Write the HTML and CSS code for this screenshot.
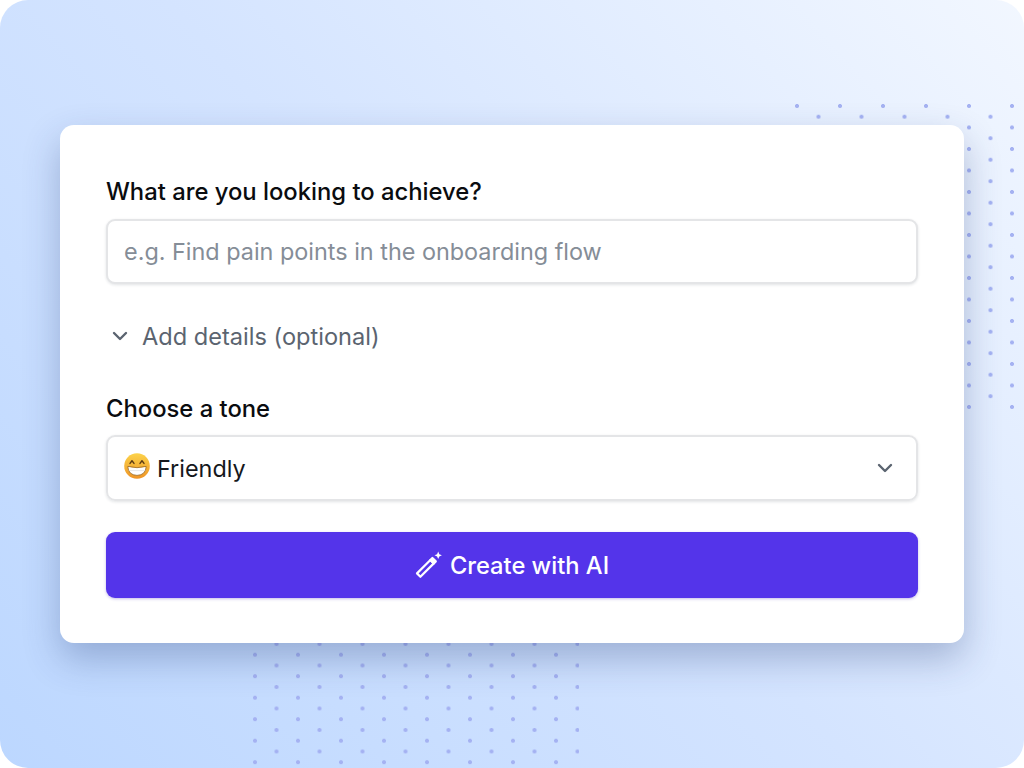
FILE: index.html
```html
<!DOCTYPE html>
<html lang="en">

<head>
    <meta charset="UTF-8">
    <meta name="viewport" content="width=device-width, initial-scale=1.0">
    <title>Create with AI</title>
    <link rel="stylesheet" href="styles.css">
</head>

<body>
    <main class="stage">
        <div class="dots dots-top"></div>
        <div class="dots dots-bottom"></div>

        <form class="card">
            <label class="field-label" for="goal">What are you looking to achieve?</label>
            <input class="text-input" id="goal" type="text" placeholder="e.g. Find pain points in the onboarding flow">

            <div class="details-toggle">
                <svg class="chevron" viewBox="0 0 16 16" width="16" height="16">
                    <path d="M2 5l6 6 6-6"></path>
                </svg>
                <span>Add details (optional)</span>
            </div>

            <div class="field-label tone-label">Choose a tone</div>
            <div class="select-box">
                <svg class="emoji" viewBox="0 0 26 26" width="26" height="26">
                    <defs>
                        <linearGradient id="emojiFace" x1="0" y1="0" x2="0" y2="1">
                            <stop offset="0" stop-color="#fcd34a"></stop>
                            <stop offset="1" stop-color="#ee9426"></stop>
                        </linearGradient>
                    </defs>
                    <circle cx="13" cy="13" r="12.8" fill="url(#emojiFace)"></circle>
                    <path d="M6 10.4l2-2.6 2 2.6M16 10.4l2-2.6 2 2.6" fill="none" stroke="#5a3a14" stroke-width="1.4" stroke-linecap="round" stroke-linejoin="round"></path>
                    <path d="M3.8 13.4q9.2 2.6 18.4 0q-.4 8.6-9.2 9q-8.8-.4-9.2-9z" fill="#fff" stroke="#8a5a18" stroke-width=".7"></path>
                    <path d="M4.6 17.6h16.8" fill="none" stroke="#d6d6d6" stroke-width=".6"></path>
                </svg>
                <span class="select-value">Friendly</span>
                <svg class="chevron select-chevron" viewBox="0 0 16 16" width="16" height="16">
                    <path d="M2 5l6 6 6-6"></path>
                </svg>
            </div>

            <button class="create-btn" type="button">
                <svg class="wand" viewBox="0 0 28 28" width="28" height="28">
                    <path d="M2 22.4L15.4 9l3.4 3.4L5.4 25.8z"></path>
                    <path class="cap" d="M15.4 9l2-2 3.4 3.4-2 2z"></path>
                    <path class="spark" d="M23.2 .6l1.1 2.6 2.6 1.1-2.6 1.1-1.1 2.6-1.1-2.6-2.6-1.1 2.6-1.1z"></path>
                </svg>
                <span>Create with AI</span>
            </button>
        </form>
    </main>
</body>

</html>
```

FILE: styles.css
```css
* {
    box-sizing: border-box;
}

html,
body {
    margin: 0;
    padding: 0;
    height: 100%;
    background-color: #fff;
}

body {
    font-family: Inter, "Liberation Sans", sans-serif;
}

.stage {
    position: relative;
    width: 1024px;
    height: 768px;
    display: flex;
    align-items: center;
    justify-content: center;
    overflow: hidden;
    border-radius: 28px;
    background: linear-gradient(48deg, #bcd7ff 0%, #d4e4ff 50%, #f2f7ff 100%);
}

.dots {
    position: absolute;
    background-image:
        radial-gradient(circle at 2px 2px, #a5b2f2 1.7px, transparent 2.3px),
        radial-gradient(circle at 2px 2px, #a5b2f2 1.7px, transparent 2.3px);
    background-size: 43px 21.5px;
    background-repeat: repeat;
}

.dots-top {
    top: 104px;
    left: 795px;
    width: 229px;
    height: 305px;
    background-position: 0 0, 21.5px 10.75px;
}

.dots-bottom {
    top: 642px;
    left: 253px;
    width: 326px;
    height: 126px;
    background-position: 21.5px 0, 0 10.75px;
}

.card {
    position: relative;
    width: 904px;
    height: 518px;
    padding: 53px 46px 45px;
    background-color: #fff;
    border-radius: 14px;
    box-shadow: 0 16px 36px rgba(35, 60, 115, 0.3);
    display: flex;
    flex-direction: column;
}

.field-label {
    display: block;
    font-size: 23.8px;
    line-height: 28px;
    font-weight: 500;
    color: #0a0c0f;
}

.text-input {
    margin-top: 13px;
    width: 100%;
    height: 65px;
    padding: 0 16px;
    border: 2px solid #e4e5e7;
    border-radius: 9px;
    box-shadow: 0 1px 3px rgba(20, 30, 50, 0.12);
    font-family: inherit;
    font-size: 23.4px;
    color: #0d0f12;
    background-color: #fff;
    outline: none;
}

.text-input::placeholder {
    color: #858d97;
    opacity: 1;
}

.details-toggle {
    margin-top: 36px;
    display: flex;
    align-items: center;
    gap: 14px;
    padding-left: 6px;
    height: 32px;
    font-size: 23.6px;
    color: #5b6470;
}

.chevron {
    flex: none;
    fill: none;
    stroke: #5b6470;
    stroke-width: 2.4;
    stroke-linecap: round;
    stroke-linejoin: round;
}

.tone-label {
    margin-top: 43px;
}

.select-box {
    margin-top: 12px;
    height: 66px;
    padding: 0 23px 0 16px;
    border: 2px solid #e4e5e7;
    border-radius: 9px;
    box-shadow: 0 1px 3px rgba(20, 30, 50, 0.12);
    display: flex;
    align-items: center;
    gap: 7px;
    font-size: 23.4px;
    color: #15181c;
}

.select-value {
    flex: 1;
}

.emoji {
    flex: none;
    margin-top: -4px;
}

.create-btn {
    margin-top: 31px;
    width: 100%;
    height: 66px;
    border: none;
    border-radius: 9px;
    background-color: #5434ea;
    box-shadow: 0 1px 3px rgba(60, 30, 180, 0.3);
    display: flex;
    align-items: center;
    justify-content: center;
    gap: 7px;
    font-family: inherit;
    font-size: 23.7px;
    font-weight: 500;
    color: #fff;
}

.wand {
    flex: none;
    fill: none;
    stroke: #fff;
    stroke-width: 2.2;
    stroke-linejoin: round;
}

.wand .cap {
    fill: #fff;
}

.wand .spark {
    fill: #fff;
    stroke: none;
}
```
